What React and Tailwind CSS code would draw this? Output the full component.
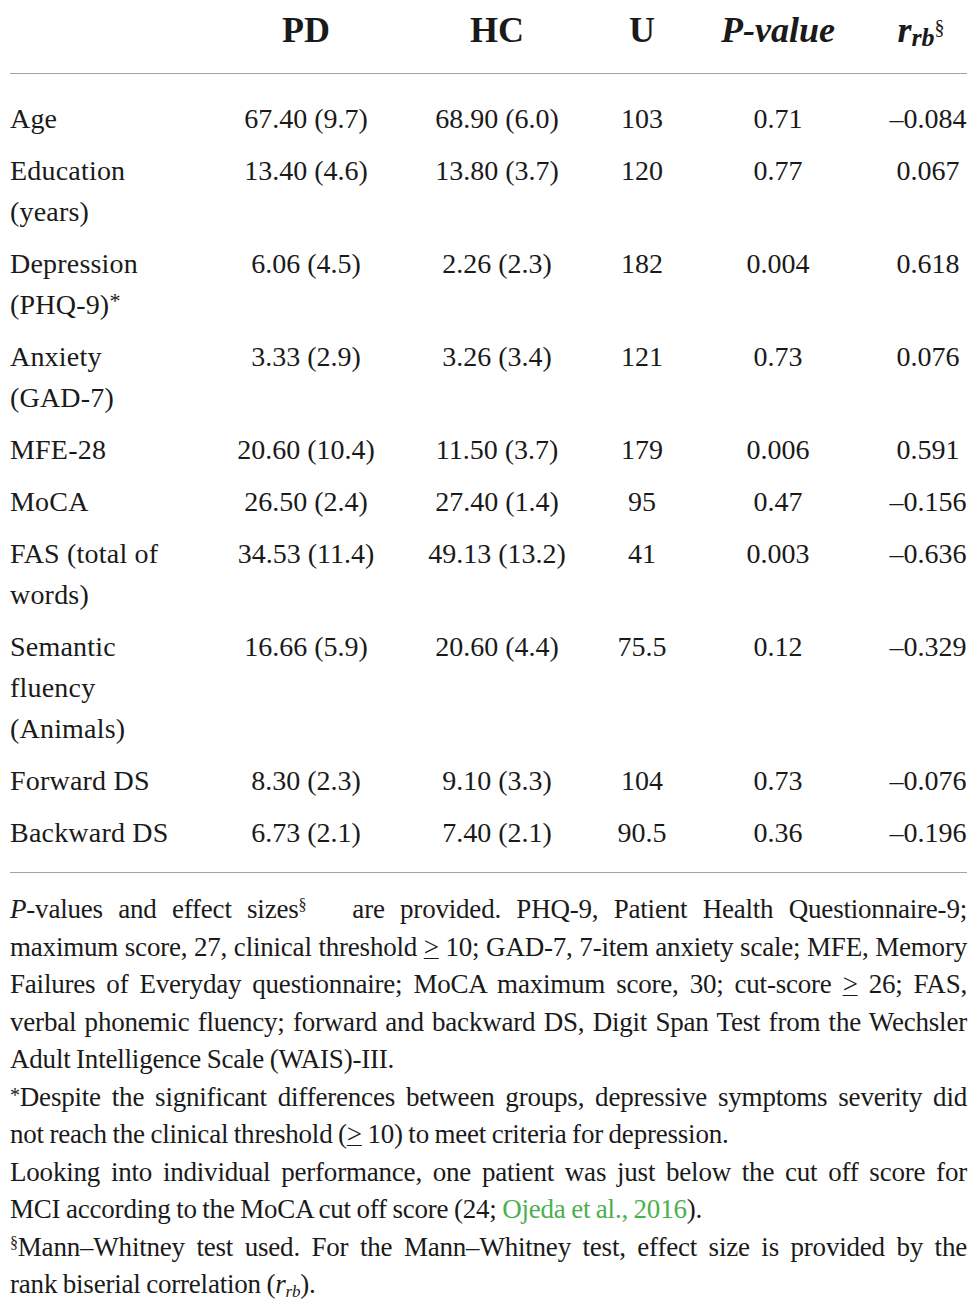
import React from 'react';

const rows = [
  { label: ['Age'], pd: '67.40 (9.7)', hc: '68.90 (6.0)', u: '103', p: '0.71', r: '–0.084' },
  { label: ['Education', '(years)'], pd: '13.40 (4.6)', hc: '13.80 (3.7)', u: '120', p: '0.77', r: '0.067' },
  { label: ['Depression', '(PHQ-9)*'], pd: '6.06 (4.5)', hc: '2.26 (2.3)', u: '182', p: '0.004', r: '0.618' },
  { label: ['Anxiety', '(GAD-7)'], pd: '3.33 (2.9)', hc: '3.26 (3.4)', u: '121', p: '0.73', r: '0.076' },
  { label: ['MFE-28'], pd: '20.60 (10.4)', hc: '11.50 (3.7)', u: '179', p: '0.006', r: '0.591' },
  { label: ['MoCA'], pd: '26.50 (2.4)', hc: '27.40 (1.4)', u: '95', p: '0.47', r: '–0.156' },
  { label: ['FAS (total of', 'words)'], pd: '34.53 (11.4)', hc: '49.13 (13.2)', u: '41', p: '0.003', r: '–0.636' },
  { label: ['Semantic', 'fluency', '(Animals)'], pd: '16.66 (5.9)', hc: '20.60 (4.4)', u: '75.5', p: '0.12', r: '–0.329' },
  { label: ['Forward DS'], pd: '8.30 (2.3)', hc: '9.10 (3.3)', u: '104', p: '0.73', r: '–0.076' },
  { label: ['Backward DS'], pd: '6.73 (2.1)', hc: '7.40 (2.1)', u: '90.5', p: '0.36', r: '–0.196' },
];

const grid = 'grid grid-cols-[216px_160px_222px_68px_204px_96px]';

const Label = ({ text }) => {
  if (text.endsWith('*')) {
    return (
      <div>
        {text.slice(0, -1)}
        <span className="text-[22px] leading-none relative top-[-6px]">*</span>
      </div>
    );
  }
  return <div>{text}</div>;
};

// justified footnote line
const J = ({ children }) => (
  <div className="text-justify [text-align-last:justify] whitespace-nowrap [word-spacing:-4px] tracking-[-0.2px]">{children}</div>
);
const L = ({ children }) => <div className="whitespace-nowrap [word-spacing:-1px] tracking-[-0.2px]">{children}</div>;

const Ge = () => <span className="underline decoration-1 underline-offset-2">&gt;</span>;

export default function App() {
  return (
    <div className="w-[979px] min-h-[1309px] bg-white text-[#1a1a1a] pl-[10px] pr-[12px] font-['Liberation_Serif','Times_New_Roman',serif]">
      <div className={`${grid} h-[73px] items-center text-[36px] font-bold leading-none pb-[14px]`}>
        <div />
        <div className="text-center">PD</div>
        <div className="text-center">HC</div>
        <div className="text-center">U</div>
        <div className="text-center italic">P-value</div>
        <div className="text-center italic pr-[14px]">
          r<sub className="text-[26px] relative top-[4px]">rb</sub>
          <sup className="text-[20px] not-italic font-normal relative top-[-8px]">§</sup>
        </div>
      </div>
      <div className="h-px bg-[#a3a3a3]" />

      <div className="pt-[24px] pb-[19px] text-[28px] leading-[41px]">
        {rows.map((r, i) => (
          <div key={i} className={`${grid} ${i > 0 ? 'mt-[11px]' : ''}`}>
            <div className="tracking-[0.2px]">
              {r.label.map((t) => (
                <Label key={t} text={t} />
              ))}
            </div>
            <div className="text-center">{r.pd}</div>
            <div className="text-center">{r.hc}</div>
            <div className="text-center">{r.u}</div>
            <div className="text-center">{r.p}</div>
            <div className="text-center">{r.r}</div>
          </div>
        ))}
      </div>
      <div className="h-px bg-[#a3a3a3]" />

      <div className="pt-[18px] text-[27px] leading-[37.5px]">
        <J>
          <i>P</i>-values and effect sizes<sup className="text-[16px]">§</sup>&nbsp;&nbsp; are provided. PHQ-9, Patient Health Questionnaire-9;
        </J>
        <J>
          maximum score, 27, clinical threshold <Ge /> 10; GAD-7, 7-item anxiety scale; MFE, Memory
        </J>
        <J>
          Failures of Everyday questionnaire; MoCA maximum score, 30; cut-score <Ge /> 26; FAS,
        </J>
        <J>verbal phonemic fluency; forward and backward DS, Digit Span Test from the Wechsler</J>
        <L>Adult Intelligence Scale (WAIS)-III.</L>
        <J>
          <span className="text-[20px] leading-none relative top-[-4px]">*</span>Despite the significant differences between groups, depressive symptoms severity did
        </J>
        <L>
          not reach the clinical threshold (<Ge /> 10) to meet criteria for depression.
        </L>
        <J>Looking into individual performance, one patient was just below the cut off score for</J>
        <L>
          MCI according to the MoCA cut off score (24; <span className="text-[#4caf50]">Ojeda et al., 2016</span>).
        </L>
        <J>
          <sup className="text-[16px]">§</sup>Mann–Whitney test used. For the Mann–Whitney test, effect size is provided by the
        </J>
        <L>
          rank biserial correlation (<i>r</i>
          <sub className="text-[17px] italic">rb</sub>).
        </L>
      </div>
    </div>
  );
}
